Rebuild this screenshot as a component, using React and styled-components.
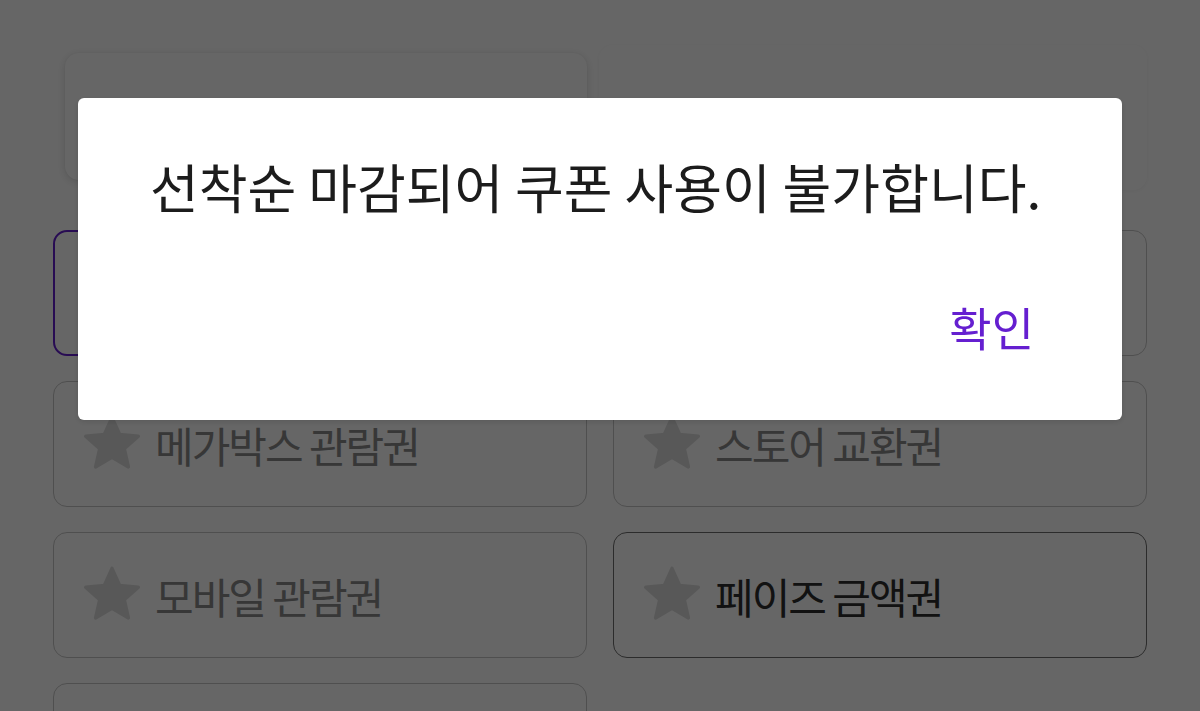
import React from "react";
import styled, { createGlobalStyle } from "styled-components";

const GlobalStyle = createGlobalStyle`
  html, body {
    margin: 0;
    padding: 0;
    background: #ffffff;
  }
  body {
    font-family: "Noto Sans CJK KR", "Noto Sans", sans-serif;
    overflow: hidden;
  }
`;

const PURPLE = "#651fd0";

const Page = styled.div`
  width: 1200px;
  height: 711px;
  box-sizing: border-box;
  padding: 45px 53px 0;
  background: #ffffff;
  overflow: hidden;
`;

const TopRow = styled.div`
  display: grid;
  grid-template-columns: 534px 534px;
  column-gap: 26px;
  height: 145px;
  align-items: start;
`;

const ActionCard = styled.div`
  margin: ${(p) => (p.$wide ? "0 0 0 -14px" : "8px 0 0 12px")};
  height: ${(p) => (p.$wide ? "145px" : "127px")};
  border-radius: 14px;
  background: #ffffff;
  box-shadow: ${(p) =>
    p.$wide
      ? "0 1px 5px rgba(0, 0, 0, 0.04)"
      : "0 2px 8px rgba(0, 0, 0, 0.14), 0 0 2px rgba(0, 0, 0, 0.06)"};
  display: flex;
  justify-content: center;
  padding-top: ${(p) => (p.$wide ? "56px" : "32px")};
  box-sizing: border-box;
  font-size: 42px;
  letter-spacing: -1px;
  color: #222222;
`;

const CouponGrid = styled.div`
  margin-top: 40px;
  display: grid;
  grid-template-columns: 534px 534px;
  grid-auto-rows: 126px;
  column-gap: 26px;
  row-gap: 25px;
`;

const CouponCard = styled.div`
  box-sizing: border-box;
  border-radius: 14px;
  border: ${(p) => (p.$selected ? "2px" : "1.5px")} solid
    ${(p) => (p.$selected ? PURPLE : p.$active ? "#6e6e6e" : "#c6c6c6")};
  display: flex;
  align-items: center;
  gap: 9px;
  padding-left: 24px;
  background: #ffffff;
`;

const StarIcon = styled.svg`
  width: 68px;
  height: 68px;
  flex: none;
  fill: #dddddd;
`;

const CouponName = styled.span`
  font-size: 42px;
  letter-spacing: -2px;
  color: ${(p) => (p.$active ? "#2e2e2e" : "#8a8a8a")};
`;

const Scrim = styled.div`
  position: fixed;
  inset: 0;
  background: rgba(0, 0, 0, 0.6);
  display: flex;
  justify-content: center;
  align-items: flex-start;
  padding-top: 98px;
`;

const Dialog = styled.div`
  width: 1044px;
  height: 322px;
  box-sizing: border-box;
  background: #ffffff;
  border-radius: 6px;
  box-shadow: 0 2px 6px rgba(0, 0, 0, 0.12);
  display: flex;
  flex-direction: column;
  padding: 53px 72px 0;
`;

const Message = styled.p`
  margin: 0;
  font-size: 53px;
  line-height: 70px;
  letter-spacing: 0;
  color: #1c1c1c;
  white-space: nowrap;
`;

const Actions = styled.div`
  display: flex;
  justify-content: flex-end;
  margin-top: 75px;
  margin-right: 16px;
`;

const TextButton = styled.button`
  border: none;
  background: transparent;
  padding: 0;
  font-family: inherit;
  font-size: 46px;
  line-height: 60px;
  letter-spacing: 0;
  color: ${PURPLE};
  cursor: pointer;
`;

function Star() {
  return (
    <StarIcon viewBox="0 0 24 24" aria-hidden="true">
      <path
        d="M12 2.6l2.72 6.05 6.58.62-4.96 4.37 1.46 6.46L12 16.73 6.2 20.1l1.46-6.46L2.7 9.27l6.58-.62z"
        stroke="#dddddd"
        strokeWidth="1.2"
        strokeLinejoin="round"
      />
    </StarIcon>
  );
}

const coupons = [
  { name: "전체 관람권", selected: true },
  { name: "기프트 카드" },
  { name: "메가박스 관람권" },
  { name: "스토어 교환권" },
  { name: "모바일 관람권" },
  { name: "페이즈 금액권", active: true },
  { name: "할인 쿠폰" },
];

export default function App() {
  return (
    <>
      <GlobalStyle />
      <Page>
        <TopRow>
          <ActionCard>쿠폰 직접 입력하기</ActionCard>
          <ActionCard $wide>쿠폰 등록</ActionCard>
        </TopRow>
        <CouponGrid>
          {coupons.map((c) => (
            <CouponCard key={c.name} $selected={c.selected} $active={c.active}>
              <Star />
              <CouponName $active={c.active || c.selected}>{c.name}</CouponName>
            </CouponCard>
          ))}
        </CouponGrid>
      </Page>
      <Scrim>
        <Dialog role="alertdialog">
          <Message>선착순 마감되어 쿠폰 사용이 불가합니다.</Message>
          <Actions>
            <TextButton type="button">확인</TextButton>
          </Actions>
        </Dialog>
      </Scrim>
    </>
  );
}
